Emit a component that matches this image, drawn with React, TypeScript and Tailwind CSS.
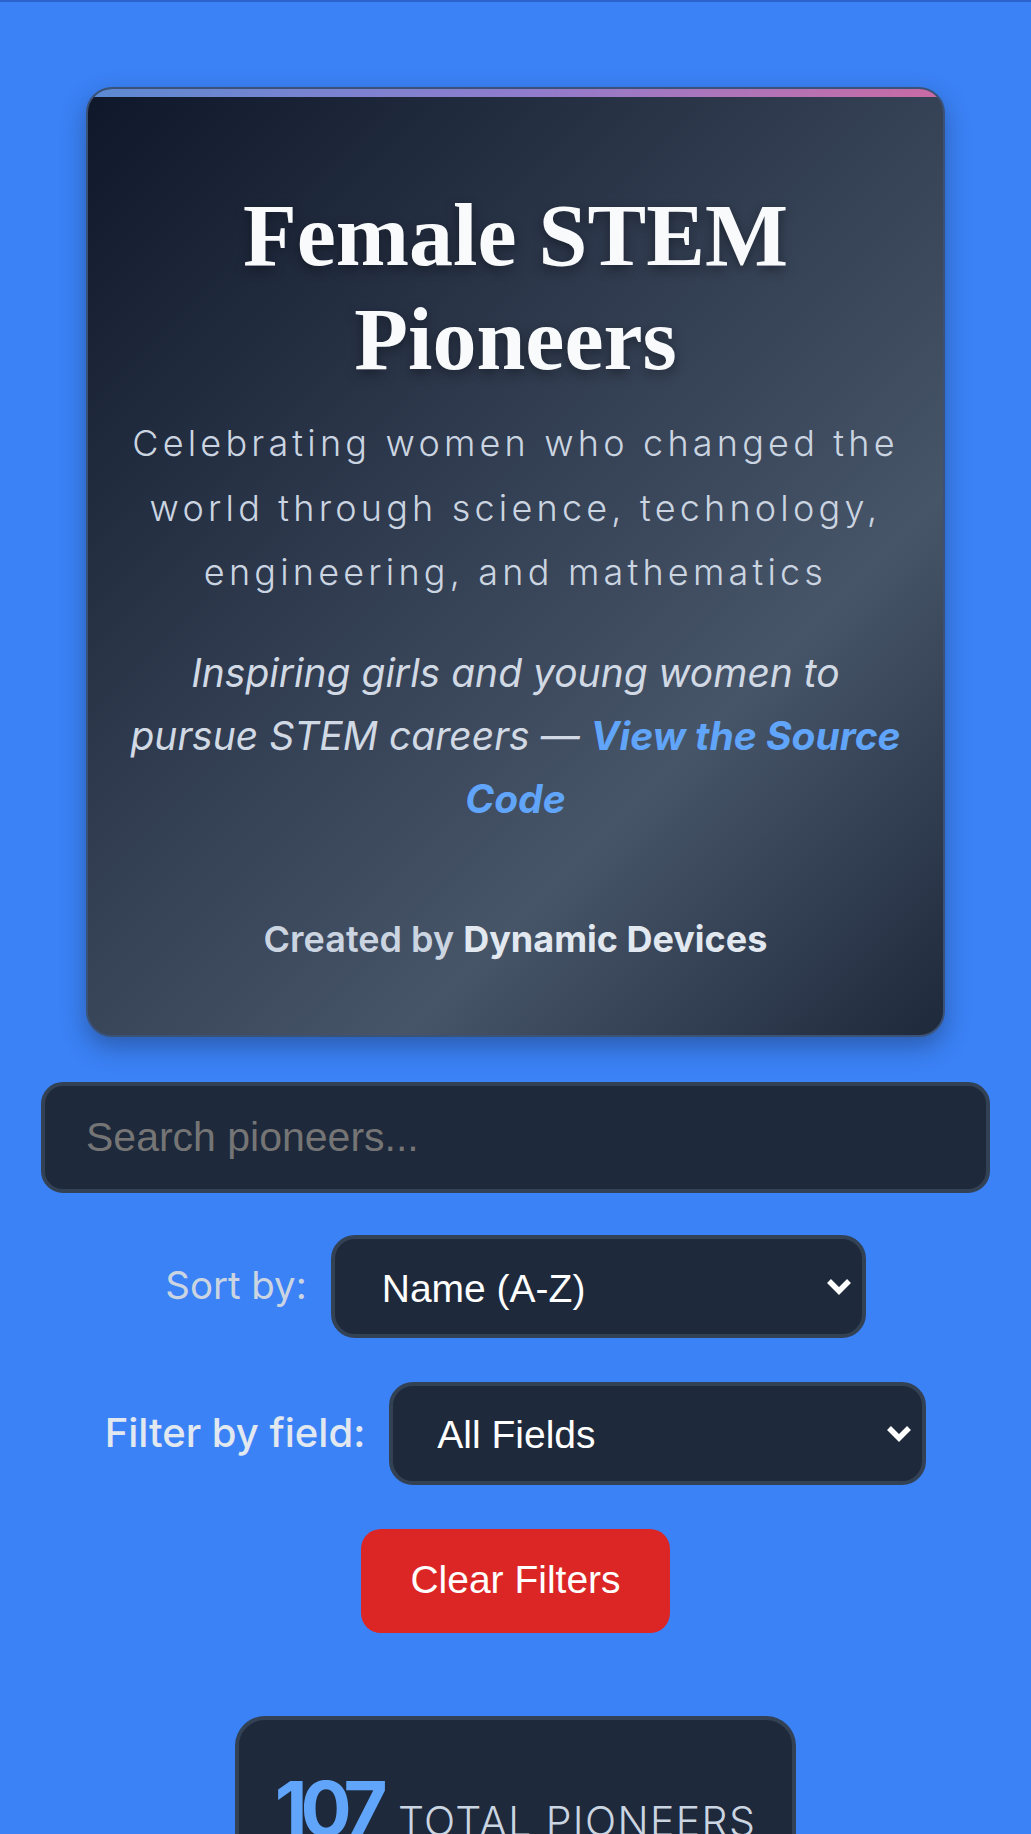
import { useState } from 'react';

const FIELDS = ['All Fields', 'Mathematics', 'Physics', 'Chemistry', 'Biology', 'Computer Science', 'Engineering', 'Medicine', 'Astronomy'];
const SORTS = ['Name (A-Z)', 'Name (Z-A)', 'Birth Year (Oldest)', 'Birth Year (Newest)'];

function Chevron() {
  return (
    <svg
      className="pointer-events-none absolute right-[14px] top-1/2 -translate-y-1/2"
      width="26"
      height="18"
      viewBox="0 0 26 18"
      fill="none"
    >
      <path d="M3 4 L13 14 L23 4" stroke="white" strokeWidth="5.5" strokeLinejoin="miter" />
    </svg>
  );
}

export default function App() {
  const [query, setQuery] = useState('');
  const [sort, setSort] = useState(SORTS[0]);
  const [field, setField] = useState(FIELDS[0]);

  return (
    <div className="min-h-screen bg-[#3b82f6] font-['Inter','Noto_Sans',sans-serif]">
      <div className="h-[2px] bg-[#2c62cc]" />
      <main className="px-[41px] pt-[85px]">
        {/* Hero card */}
        <header className="relative mx-auto w-[859px] overflow-hidden rounded-[26px] border-2 border-[#3b5278] bg-[linear-gradient(135deg,#0f172a_0%,#475569_70%,#1e293b_100%)] px-[40px] pt-[95px] pb-[70px] text-center shadow-[0_10px_24px_rgba(15,23,42,0.35)]">
          <div className="absolute inset-x-0 top-0 h-[8px] bg-gradient-to-r from-[#5a8ad2] via-[#8e7cce] to-[#c96aa4]" />
          <h1 className="font-['Liberation_Serif','Times_New_Roman',serif] text-[88px] font-bold leading-[104px] text-[#f8fafc] [text-shadow:0_4px_12px_rgba(0,0,0,0.4)]">
            Female STEM
            <br />
            Pioneers
          </h1>
          <p className="mt-[19px] whitespace-nowrap text-[36px] font-light leading-[64.5px] tracking-[4.2px] text-[#cbd5e1]">
            Celebrating women who changed the
            <br />
            world through science, technology,
            <br />
            engineering, and mathematics
          </p>
          <p className="mt-[36px] whitespace-nowrap text-[39px] italic leading-[63px] text-[#d1d9e4]">
            Inspiring girls and young women to
            <br />
            pursue STEM careers —{' '}
            <a href="#" className="font-bold text-[#60a5fa]">
              View the Source
              <br />
              Code
            </a>
          </p>
          <p className="mt-[83px] text-[36px] font-semibold leading-[52px] text-[#cbd5e1]">
            Created by <span className="font-bold text-[#e2e8f0]">Dynamic Devices</span>
          </p>
        </header>

        {/* Search */}
        <input
          value={query}
          onChange={(e) => setQuery(e.target.value)}
          placeholder="Search pioneers..."
          className="mt-[45px] block h-[111px] w-full rounded-[22px] border-4 border-[#334155] bg-[#1e293b] px-[41px] font-['Liberation_Sans',Arial,sans-serif] text-[41px] text-white outline-none placeholder:text-[#757575]"
        />

        {/* Controls */}
        <div className="mt-[42px] flex flex-col items-center gap-[44px]">
          <div className="flex items-center gap-[24px]">
            <label className="text-[38.4px] text-[#cbd5e1]">Sort by:</label>
            <div className="relative">
              <select
                value={sort}
                onChange={(e) => setSort(e.target.value)}
                className="h-[103px] w-[535px] appearance-none rounded-[24px] border-4 border-[#334155] bg-[#1e293b] pt-[6px] pl-[47px] font-['Liberation_Sans',Arial,sans-serif] text-[39px] text-white outline-none"
              >
                {SORTS.map((s) => (
                  <option key={s}>{s}</option>
                ))}
              </select>
              <Chevron />
            </div>
          </div>

          <div className="flex items-center gap-[24px]">
            <label className="text-[40px] font-medium text-[#e2e8f0]">Filter by field:</label>
            <div className="relative">
              <select
                value={field}
                onChange={(e) => setField(e.target.value)}
                className="h-[103px] w-[537px] appearance-none rounded-[24px] border-4 border-[#334155] bg-[#1e293b] pt-[4px] pl-[44px] font-['Liberation_Sans',Arial,sans-serif] text-[39px] text-white outline-none"
              >
                {FIELDS.map((f) => (
                  <option key={f}>{f}</option>
                ))}
              </select>
              <Chevron />
            </div>
          </div>

          <button
            onClick={() => {
              setQuery('');
              setSort(SORTS[0]);
              setField(FIELDS[0]);
            }}
            className="h-[104px] w-[309px] rounded-[20px] bg-[#dc2626] font-['Liberation_Sans',Arial,sans-serif] text-[39px] text-white"
          >
            Clear Filters
          </button>
        </div>

        {/* Stats */}
        <div className="mx-auto mt-[83px] w-[561px] rounded-[30px] border-4 border-[#334155] bg-[#1e293b] px-[20px] pt-[50px] pb-[40px]">
          <div className="flex items-baseline justify-center gap-[17px] whitespace-nowrap">
            <span className="text-[76px] font-bold leading-none tracking-[-0.09em] text-[#60a5fa]">107</span>
            <span className="text-[41px] font-light uppercase tracking-[1.4px] text-[#cbd5e1]">Total Pioneers</span>
          </div>
        </div>
      </main>
    </div>
  );
}
